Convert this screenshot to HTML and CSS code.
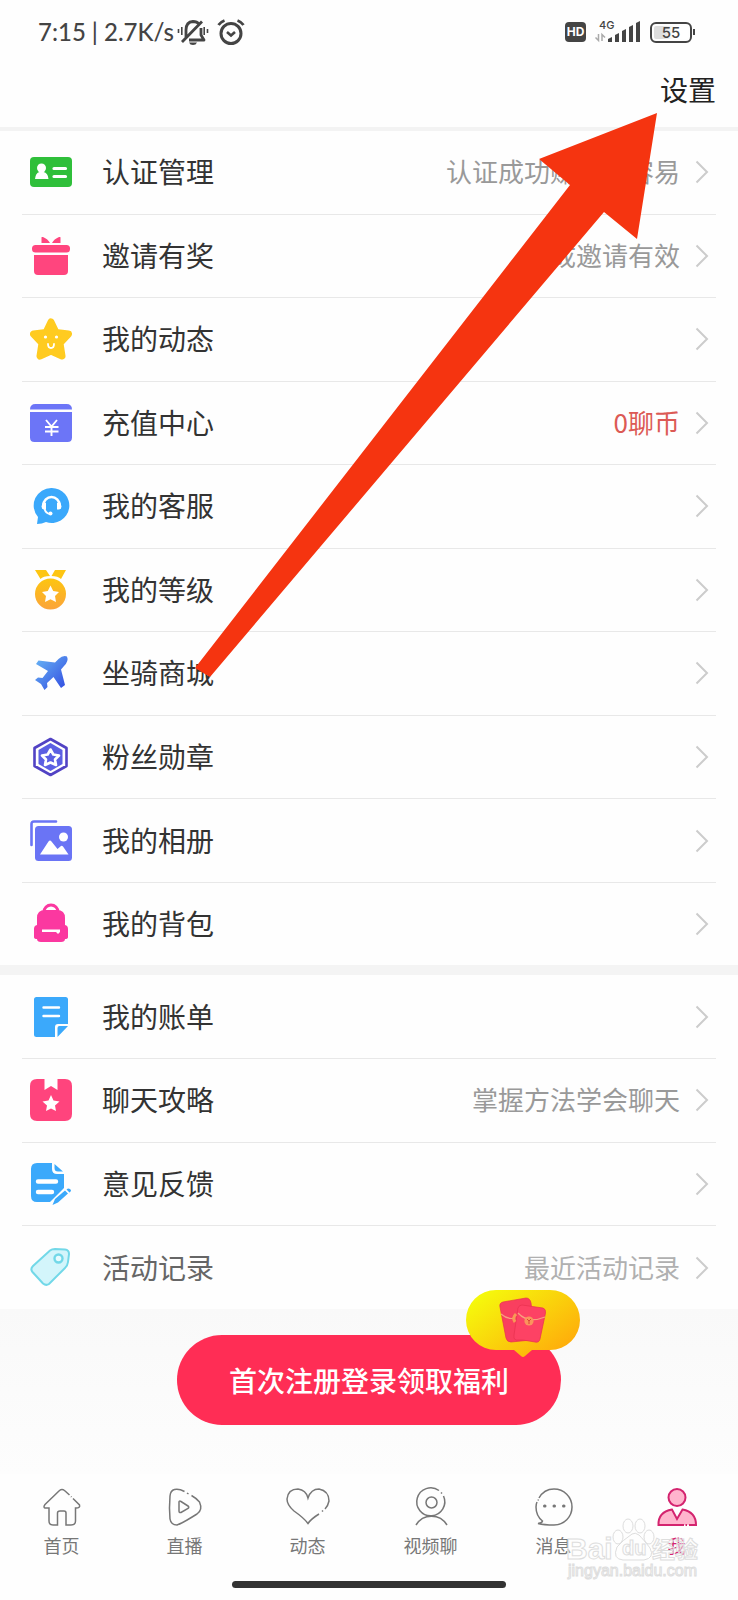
FILE: index.html
```html
<!DOCTYPE html>
<html lang="zh-CN">
<head>
<meta charset="utf-8">
<meta name="viewport" content="width=device-width, initial-scale=1">
<title>我</title>
<link rel="stylesheet" href="styles.css">
</head>
<body>
<header class="top">
  <div class="status">
    <div class="status-side">
      <span class="clock">7:15 | 2.7K/s</span>
      <svg width="32" height="28" viewBox="0 0 32 28" fill="none" stroke="#444" stroke-width="2.8">
        <path d="M9 20V12Q9 4 16 3.500Q20 3.500 22 6M5 24L25 3.500M24 10V17L27 22H12" stroke-linejoin="round"/>
        <path d="M12 24.500H20Q19 27 16 27T12 24.500Z" fill="#444" stroke="none"/>
        <path d="M1.500 11V15M4.800 9V17M27.200 9V17M30.500 11V15" stroke-width="1.600"/>
      </svg>
      <svg class="alarm" width="28" height="28" viewBox="0 0 28 28" fill="none" stroke="#444">
        <circle cx="14" cy="15.500" r="10" stroke-width="3"/>
        <path d="M10 14L14 17.500L18 14" stroke-width="2.600"/>
        <path d="M1.500 7Q3.500 4 7.500 2.500M26.500 7Q24.500 4 20.500 2.500" stroke-width="2.800"/>
      </svg>
    </div>
    <div class="status-side">
      <span class="hd">HD</span>
      <svg class="signal" width="46" height="26" viewBox="0 0 46 26">
        <text x="4" y="10" class="net">4G</text>
        <path d="M3.500 15V21.500L0.500 18.500M7 22V15.500L10 18.500" fill="none" stroke="#aaa" stroke-width="1.500"/>
        <path d="M13 23V20L17 18V23ZM20 23V16L24 14V23ZM27 23V12L31 10V23ZM34 23V8L38 6V23ZM41 23V4L45 2V23Z" fill="#444"/>
      </svg>
      <span class="battery"><span class="cell">55</span></span>
    </div>
  </div>
  <div class="bar"><button class="settings" type="button">设置</button></div>
</header>

<main class="content">
<nav class="menu menu-main">
  <a class="row" href="#">
    <svg class="icon" viewBox="0 0 42 42"><rect y="6" width="42" height="30" rx="4" fill="#2fbf3a"/><circle cx="11.500" cy="17" r="4.500" fill="#fff"/><path d="M9.500 19H13.500V21Q18 22 18.500 28H5Q5.500 22 9.500 21Z" fill="#fff"/><path d="M24 17.500H35.500M24 25.500H35.500" stroke="#fff" stroke-width="3.200" stroke-linecap="round"/></svg>
    <span class="label">认证管理</span><span class="note">认证成功赚钱更容易</span><svg class="chev" viewBox="0 0 14 24"><path d="M1.500 1.500L12 12L1.500 22.500"/></svg></a>
  <a class="row" href="#">
    <svg class="icon" viewBox="0 0 42 42" fill="#ff457e"><path d="M11.500 3Q11 1.500 13 2Q18 4 20 8H11.500ZM30.500 3Q31 1.500 29 2Q24 4 22 8H30.500Z"/><rect x="2" y="10" width="38" height="7.500" rx="3.500"/><path d="M4 20H38V36Q38 40 34 40H8Q4 40 4 36Z"/></svg>
    <span class="label">邀请有奖</span><span class="note">完成邀请有效</span><svg class="chev" viewBox="0 0 14 24"><path d="M1.500 1.500L12 12L1.500 22.500"/></svg></a>
  <a class="row" href="#">
    <svg class="icon" viewBox="0 0 42 42"><path d="M21 4L26 14.500L38.500 16L30 25L32 38L21 33L10 38L12 25L3.500 16L16 14.500Z" fill="#ffcb20" stroke="#ffcb20" stroke-width="7" stroke-linejoin="round"/><circle cx="15.500" cy="19" r="1.600" fill="#fff"/><circle cx="26.500" cy="19" r="1.600" fill="#fff"/><path d="M18 26Q18 30 21 30T24 26" fill="none" stroke="#fff" stroke-width="1.800" stroke-linecap="round"/></svg>
    <span class="label">我的动态</span><svg class="chev" viewBox="0 0 14 24"><path d="M1.500 1.500L12 12L1.500 22.500"/></svg></a>
  <a class="row" href="#">
    <svg class="icon" viewBox="0 0 42 42"><path d="M0 7.500Q0 2 5.500 2H36.500Q42 2 42 7.500ZM0 10H42V35.500Q42 40 37.500 40H4.500Q0 40 0 35.500Z" fill="#6c75f7"/><path d="M16 18L21.500 24.500L27 18M15 25H28.500M15 29.500H28.500M21.500 24.500V34" fill="none" stroke="#fff" stroke-width="1.900"/></svg>
    <span class="label">充值中心</span><span class="note coins">0聊币</span><svg class="chev" viewBox="0 0 14 24"><path d="M1.500 1.500L12 12L1.500 22.500"/></svg></a>
  <a class="row" href="#">
    <svg class="icon" viewBox="0 0 42 42"><path d="M21.500 3A17.500 17.500 0 1 1 16 37Q12 39 7 39L8 32A17.500 17.500 0 0 1 21.500 3Z" fill="#3aa8fb"/><path d="M13.500 21V20A8 8 0 0 1 29.500 20V21" fill="none" stroke="#fff" stroke-width="2.600"/><path d="M12.500 18H16V24.500H14Q11.500 24 11.500 21.500ZM30.500 18H27V24.500H29Q31.500 24 31.500 21.500Z" fill="#fff"/><path d="M14.500 24Q16 28.500 20 29" fill="none" stroke="#fff" stroke-width="2"/><circle cx="20.500" cy="28.500" r="2" fill="#fff"/></svg>
    <span class="label">我的客服</span><svg class="chev" viewBox="0 0 14 24"><path d="M1.500 1.500L12 12L1.500 22.500"/></svg></a>
  <a class="row" href="#">
    <svg class="icon" viewBox="0 0 42 42"><defs><linearGradient id="gold" x2="0" y2="1"><stop stop-color="#fdc510"/><stop offset="1" stop-color="#fba43a"/></linearGradient></defs><path d="M5 1H16L20 7Q13 7 10.500 10ZM36 1H25L21.500 7Q28 7 31 10Z" fill="#fdc512"/><circle cx="20.500" cy="25" r="15.500" fill="url(#gold)"/><path d="M20.500 16.500L23.200 22L29 23L25 27L26 33L20.500 30.200L15 33L16 27L12 23L17.800 22Z" fill="#fff"/></svg>
    <span class="label">我的等级</span><svg class="chev" viewBox="0 0 14 24"><path d="M1.500 1.500L12 12L1.500 22.500"/></svg></a>
  <a class="row" href="#">
    <svg class="icon" viewBox="0 0 42 42"><defs><linearGradient id="sky" x2="1" y2="1"><stop stop-color="#69b8f5"/><stop offset="1" stop-color="#3048e0"/></linearGradient></defs><path d="M37 4.500Q39 9 34 14L31 17.500L35 33L31 36L23.500 25L17 31L17.500 35L14.500 38L11 32L5 28L8 25.500L12.500 26L18 19L6 12L8.500 8.500L25 10.500L28.500 7Q33 3 37 4.500Z" fill="url(#sky)"/></svg>
    <span class="label">坐骑商城</span><svg class="chev" viewBox="0 0 14 24"><path d="M1.500 1.500L12 12L1.500 22.500"/></svg></a>
  <a class="row" href="#">
    <svg class="icon" viewBox="0 0 42 42"><path d="M20.500 3L36.500 12V30L20.500 39L4.500 30V12Z" fill="#fff" stroke="#5142c4" stroke-width="2.600" stroke-linejoin="round"/><path d="M20.500 7L32.500 14V28L20.500 35L8.500 28V14Z" fill="#5b5fe3"/><path d="M20.500 13.500L23.300 18.500L29 19.500L25 23.500L26 29L20.500 26.500L15 29L16 23.500L12 19.500L17.700 18.500Z" fill="#5b5fe3" stroke="#fff" stroke-width="2.600" stroke-linejoin="round"/></svg>
    <span class="label">粉丝勋章</span><svg class="chev" viewBox="0 0 14 24"><path d="M1.500 1.500L12 12L1.500 22.500"/></svg></a>
  <a class="row" href="#">
    <svg class="icon" viewBox="0 0 42 42"><path d="M1.500 25V4Q1.500 1.500 4 1.500H26" fill="none" stroke="#6a74f5" stroke-width="2.600" stroke-linecap="round"/><rect x="5" y="6" width="37" height="35" rx="3.500" fill="#6a74f5"/><circle cx="33.500" cy="17" r="4.500" fill="#fff"/><path d="M10 34.500L18.500 21.500Q20 19.500 21.500 21.500L27.500 29L31 26Q32 25.500 33 26.500L38.500 34.500Z" fill="#fff"/></svg>
    <span class="label">我的相册</span><svg class="chev" viewBox="0 0 14 24"><path d="M1.500 1.500L12 12L1.500 22.500"/></svg></a>
  <a class="row" href="#">
    <svg class="icon" viewBox="0 0 42 42" fill="#fb38a0"><path d="M14 9A7 7 0 0 1 28 9" fill="none" stroke="#fb38a0" stroke-width="3"/><path d="M7 15Q7 7 15 7H27Q35 7 35 15V22Q38 22.500 38 26V34Q38 36 35 36Q35 39 31 39H11Q7 39 7 36Q4 36 4 34V26Q4 22.500 7 22Z"/><path d="M12 26.500H30V29L28 31L26 29H12Z" fill="#fff"/></svg>
    <span class="label">我的背包</span><svg class="chev" viewBox="0 0 14 24"><path d="M1.500 1.500L12 12L1.500 22.500"/></svg></a>
</nav>

<nav class="menu menu-more">
  <a class="row" href="#">
    <svg class="icon" viewBox="0 0 42 42"><path d="M6.500 1H35.500Q38 1 38 3.500V28H28Q25 28 25 31V41H6.500Q4 41 4 38.500V3.500Q4 1 6.500 1ZM27.500 41V32Q27.500 30 29.500 30H38Z" fill="#3ba9fb"/><path d="M13.500 11.500H29M13.500 20H29" stroke="#fff" stroke-width="2.400" stroke-linecap="round"/></svg>
    <span class="label">我的账单</span><svg class="chev" viewBox="0 0 14 24"><path d="M1.500 1.500L12 12L1.500 22.500"/></svg></a>
  <a class="row" href="#">
    <svg class="icon" viewBox="0 0 42 42"><path d="M7 0H14.500V11L21 7L27.500 11V0H35Q42 0 42 7V35Q42 42 35 42H7Q0 42 0 35V7Q0 0 7 0Z" fill="#ff447d"/><path d="M21 16L23.500 21.500L29.500 22.500L25 26.500L26 32L21 29.500L16 32L17 26.500L12.500 22.500L18.500 21.500Z" fill="#fff"/></svg>
    <span class="label">聊天攻略</span><span class="note">掌握方法学会聊天</span><svg class="chev" viewBox="0 0 14 24"><path d="M1.500 1.500L12 12L1.500 22.500"/></svg></a>
  <a class="row" href="#">
    <svg class="icon" viewBox="0 0 42 42"><path d="M7 0H22V6Q22 11 27 11H34V25L20 39H7Q1 39 1 33V6Q1 0 7 0ZM24.500 1L33 8.500H28Q24.500 8.500 24.500 5Z" fill="#3ba9fb"/><path d="M8 18.500H26M8 29H22" stroke="#fff" stroke-width="4.400" stroke-linecap="round"/><path d="M22.500 42L25 36L35 27.500L38 30.500L28 39.500ZM36.500 26.500L38 25.500Q41 25.500 41 28L39.500 29.500Z" fill="#3ba9fb"/></svg>
    <span class="label">意见反馈</span><svg class="chev" viewBox="0 0 14 24"><path d="M1.500 1.500L12 12L1.500 22.500"/></svg></a>
  <a class="row fading" href="#">
    <svg class="icon" viewBox="0 0 42 42"><path d="M20 3.500Q22 2 25 2L35 2.500Q39 3 39 7L38 15Q37.500 19 35 21L19 37Q16 39 13 36.500L2.500 25Q0 22 3 19Z" fill="#d3f5fb" stroke="#72d8e8" stroke-width="2"/><circle cx="28.500" cy="11.500" r="4" fill="#e8fbfe" stroke="#72d8e8" stroke-width="2.400"/></svg>
    <span class="label">活动记录</span><span class="note">最近活动记录</span><svg class="chev" viewBox="0 0 14 24"><path d="M1.500 1.500L12 12L1.500 22.500"/></svg></a>
</nav>

<svg class="pointer" width="464" height="568" viewBox="0 0 464 568"><path d="M462 0L442 126L409 99L15 564L0 555L375 72L344 46Z" fill="#f53410"/></svg>
</main>

<section class="promo">
  <button class="join" type="button">首次注册登录领取福利
    <svg class="badge" width="114" height="68" viewBox="0 0 114 68"><defs><linearGradient id="bub" x2="1" y2=".8"><stop offset=".1" stop-color="#f5fa0c"/><stop offset="1" stop-color="#ffa90b"/></linearGradient></defs><path d="M30 0H84A30 30 0 0 1 84 60H66L59 66Q57 68 55 66L48 60H30A30 30 0 0 1 30 0Z" fill="url(#bub)"/>
      <g stroke="#e8304f" stroke-width=".7"><path d="M37 12L60 8Q64 8 65 13L69 46Q69 50 65 50L45 52Q41 52 40 48L34 17Q33 13 37 12Z" fill="#f93f5f"/><path d="M56 15L77 18Q80 19 79.500 23L74 49Q73 53 69 52L57 50L50 50Q47 49 48 45L52 18Q53 15 56 15Z" fill="#fd4264"/></g>
      <path d="M35 24Q42 30 49 28M52 23Q62 34 79 27" fill="none" stroke="#f7a07f" stroke-width="1.200"/><path d="M50 24Q46 28 49 32" fill="none" stroke="#f79a55" stroke-width="3"/><circle cx="63" cy="31" r="4.600" fill="#fa945c"/><path d="M61 29L63 31L65 29M63 31V34" fill="none" stroke="#de4338"/></svg>
  </button>
</section>

<footer class="dock">
  <nav class="tabs">
    <a class="tab" href="#"><svg viewBox="0 0 44 44"><path d="M33 13.500L39.500 20Q40.500 23 36 23H35.500V36Q35.500 40 31 40H26V28Q26 26 24 26H20Q17.500 26 17.500 28V40H13Q9 40 9 36V23H5Q3 22 5 19.500L19.500 5.500Q22 3.500 24.500 5.500L29.500 10M31 11.500L31.500 12"/></svg>首页</a>
    <a class="tab" href="#"><svg viewBox="0 0 44 44"><path d="M21.500 6.500Q16 3.500 11.500 4.500Q7.500 5.500 7 11Q6 23 7 34Q8 40 14 40Q18 39 34 29Q40 25 36.500 17Q33 13 28.500 10.500M24 8L25.500 9M16 17Q16 15.500 18 16.500L25 21Q26.500 22 25 23.500L18 27.500Q16 28 16 26Z"/></svg>直播</a>
    <a class="tab" href="#"><svg viewBox="0 0 44 44"><path d="M33 29Q25 34 22 38.500Q18 33 8 26Q1 20 1 14Q2 4 12 4Q20 5 22 13Q25 4 33 4Q43 6 43 16Q42 21 39 24M36 26.500L37 25.500"/></svg>动态</a>
    <a class="tab" href="#"><svg viewBox="0 0 44 44"><path d="M30 5.500A14 14 0 1 0 34.500 11M32 7.500L33 8.500"/><circle cx="22.500" cy="17.500" r="5.500"/><path d="M7 40A18 18 0 0 1 38 40"/></svg>视频聊</a>
    <a class="tab" href="#"><svg viewBox="0 0 44 44"><path d="M7 13Q12 4 22 4A18 18 0 0 1 22 40Q12 40 6 38.500Q10 38 10.500 36Q4 31 4 22Q4 19 5 17M6 15.500L6.500 14.500"/><path d="M12.500 21H13M22 21H22.500M31.500 21H32" stroke-width="3" stroke-linecap="round"/></svg>消息</a>
    <a class="tab active" href="#"><svg viewBox="0 0 44 44"><circle cx="22" cy="12.500" r="8.500"/><path d="M29 40H3.500Q3 27 17 24.500L22 34L27.500 24.500Q41 27 41 40H34M30.500 40H32"/></svg>我</a>
  </nav>
  <div class="home-bar"></div>
  <svg class="watermark" width="136" height="66" viewBox="0 0 136 66" aria-hidden="true">
    <text x="0" y="42" class="wm-big">Bai</text>
    <g><ellipse cx="52" cy="20" rx="5" ry="7"/><ellipse cx="62" cy="9" rx="5" ry="7"/><ellipse cx="74" cy="9" rx="5" ry="7"/><ellipse cx="83" cy="20" rx="5" ry="7"/></g>
    <path d="M66 17Q57 23 51 30Q46 42 57 43H78Q89 41 84 31Q77 22 73 18Q69 15 66 17Z"/>
    <text x="56" y="38" class="wm-du">du</text>
    <text x="86" y="41" class="wm-cn">经验</text>
    <text x="2" y="59" class="wm-url">jingyan.baidu.com</text>
  </svg>
</footer>
</body>
</html>
```
FILE: styles.css
```css
* { box-sizing: border-box; }

body {
  margin: 0;
  min-height: 100vh;
  display: flex;
  flex-direction: column;
  background: #fefefe;
  color: #333;
  font-family: "Noto Sans CJK SC", sans-serif;
}

a { color: inherit; text-decoration: none; }
button { border: 0; font-family: inherit; cursor: pointer; }
svg { display: block; flex: none; }

/* Header */
.top { border-bottom: 4px solid #f3f3f3; }
.status {
  height: 64px;
  padding: 0 46px 0 38px;
  display: flex;
  align-items: center;
  justify-content: space-between;
}
.status-side { display: flex; align-items: center; }
.clock {
  margin-right: 3px;
  font: 500 24px/28px Lato, sans-serif;
  color: #444;
}
.alarm { margin-left: 8px; }
.hd {
  width: 21px;
  border-radius: 4px;
  background: #444;
  color: #fff;
  font: 700 12px/20px Inter, sans-serif;
  text-align: center;
}
.signal { margin: 0 9px; overflow: visible; }
.net { font: 500 11px Inter, sans-serif; fill: #444; }
.battery {
  position: relative;
  padding: 2px;
  border: 2px solid #444;
  border-radius: 6px;
}
.battery::after {
  content: "";
  position: absolute;
  left: 100%;
  top: 5px;
  margin-left: 3px;
  width: 2px;
  height: 6px;
  background: #444;
}
.cell {
  display: block;
  width: 34px;
  border-radius: 2px;
  background: linear-gradient(90deg, #ddd 25%, #fff 60%);
  color: #444;
  font: 500 15px/13px Inter, sans-serif;
  text-align: center;
}
.bar {
  height: 63px;
  padding: 0 22px;
  display: flex;
  justify-content: flex-end;
  align-items: flex-start;
}
.settings {
  padding: 5px 0;
  background: none;
  color: #222;
  font-size: 28px;
  line-height: 40px;
}

/* Menu rows */
.content {
  position: relative;
  flex: 1 0 auto;
  display: flex;
  flex-direction: column;
}
.menu { display: flex; flex-direction: column; padding: 0 22px; }
.menu-main { flex: 10 0 auto; }
.menu-more { flex: 4 0 auto; }
.menu-main::after {
  content: "";
  height: 10px;
  margin: 0 -22px;
  background: #f4f4f4;
}
.row {
  flex: 1 0 auto;
  min-height: 80px;
  padding: 0 7px 0 8px;
  display: flex;
  align-items: center;
  border-bottom: 1px solid #e8e8e8;
}
.row:last-child { border-bottom: 0; }
.icon { width: 42px; height: 42px; }
.label {
  margin-left: 30px;
  padding-bottom: 2px;
  font-size: 28px;
  line-height: 40px;
}
.note {
  margin-left: auto;
  padding-bottom: 2px;
  font-size: 26px;
  line-height: 40px;
  color: #999;
}
.coins { color: #dc5a55; }
.chev {
  width: 14px;
  height: 24px;
  margin-left: auto;
  fill: none;
  stroke: #ccc;
  stroke-width: 2;
}
.note + .chev { margin-left: 15px; }
.fading .label { color: #666; }
.fading .note { color: #b0b0b0; }
.pointer { position: absolute; left: 195px; top: -18px; pointer-events: none; }

/* Sign-up prompt */
.promo {
  height: 165px;
  padding-top: 26px;
  display: flex;
  justify-content: center;
  align-items: flex-start;
  background: linear-gradient(#f9f9f9, #fdfdfd);
}
.join {
  position: relative;
  padding: 0 52px;
  border-radius: 45px;
  background: #ff2d55;
  color: #fff;
  font-size: 28px;
  font-weight: 500;
  line-height: 90px;
}
.badge { position: absolute; right: -19px; top: -45px; }

/* Bottom tabs */
.dock { position: relative; height: 126px; padding-top: 11px; }
.tabs { display: grid; grid-template-columns: repeat(6, 1fr); }
.tab {
  display: flex;
  flex-direction: column;
  align-items: center;
  color: #777;
  font-size: 18px;
  line-height: 28px;
  gap: 2px;
}
.tab svg { width: 44px; height: 44px; fill: none; stroke: #777; stroke-width: 1.5; }
.tab.active { color: #d4246f; }
.tab.active svg { fill: #ffb5cd; stroke: #d4246f; stroke-width: 2; }
.home-bar {
  width: 37%;
  height: 7px;
  margin: 22px auto 0;
  border-radius: 4px;
  background: #333;
}
.watermark {
  position: absolute;
  right: 36px;
  top: 43px;
  pointer-events: none;
  fill: #fff;
  fill-opacity: .4;
  stroke: #ddd;
  stroke-width: 1;
}
.wm-big { font: 700 30px "Liberation Sans", sans-serif; }
.wm-du { font: 700 20px "Liberation Sans", sans-serif; }
.wm-cn { font: 700 23px "Noto Sans CJK SC", sans-serif; }
.wm-url { font: 400 16px "Liberation Sans", sans-serif; }
```
